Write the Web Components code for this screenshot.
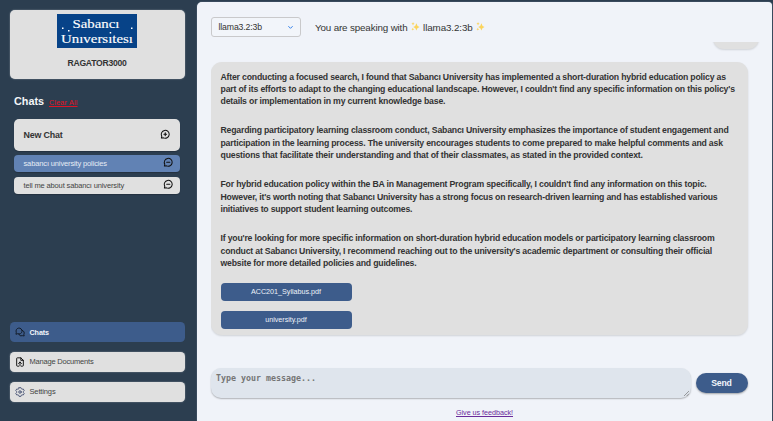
<!DOCTYPE html>
<html lang="en"><head><meta charset="utf-8"><title>RAGATOR3000</title>
<style>html,body{margin:0;height:100%;overflow:hidden}body{background:#2c3e50;font-family:"Liberation Sans",Arial,sans-serif;color:#333}</style></head><body>
<rag-app></rag-app>
<script>
const make = (name, html, ready) => {
  const t = document.createElement('template');
  t.innerHTML = '<style>*{box-sizing:border-box}svg{display:block}</style>' + html;
  customElements.define(name, class extends HTMLElement {
    constructor(){ super(); this.attachShadow({mode:'open'}).append(t.content.cloneNode(true)); }
    connectedCallback(){ if (ready) ready(this, this.shadowRoot); }
  });
};

/* One line of text whose tracking is tuned to occupy the width in "w". */
make('fit-text', `<style>:host{display:inline-block;white-space:pre}span{display:inline-block}:host([link]) span{text-decoration:underline}</style><span><slot></slot></span>`, (el, r) => {
  const s = r.querySelector('span'), w = parseFloat(el.getAttribute('w'));
  s.style.letterSpacing = '0px';
  s.style.letterSpacing = (w - s.getBoundingClientRect().width) / el.textContent.length + 'px';
});

const icons = {
  plus:'<path d="M3.2 20.8l.9-4.3A9 9 0 1 1 8 20.2z"/><path d="M12 9v6M9 12h6" stroke-width="2.6"/>',
  minus:'<path d="M3.2 20.8l.9-4.3A9 9 0 1 1 8 20.2z"/><path d="M8.500 12h7"/>',
  chats:'<path d="M2.500 16.500l.6-3.700A7.200 7.200 0 1 1 7 16.500z"/><path d="M17.500 8a6.300 6.300 0 0 1 3.700 9.500l.8 4-3.900-.7A6.700 6.700 0 0 1 9 17"/>',
  doc:'<path d="M9 22H5.500A1.500 1.500 0 0 1 4 20.500V3.500A1.500 1.500 0 0 1 5.500 2H14l6 6v12.500a1.500 1.500 0 0 1-1.500 1.500H15M14 2v6h6M12 21V12M8.500 15.500L12 12l3.500 3.500"/>',
  gear:'<path d="M9.700 1.500h4.600l.9 2.800 1.700 1 2.900-.6 2.300 4-2 2.200v2.200l2 2.200-2.300 4-2.900-.6-1.700 1-.9 2.800H9.700l-.9-2.800-1.700-1-2.900.6-2.300-4 2-2.200v-2.200l-2-2.200 2.300-4 2.900.6 1.700-1z" stroke-width="1.900"/><circle cx="12" cy="12" r="3" stroke-width="2"/>',
  down:'<path d="M3 7l9 9 9-9" stroke-width="4.500"/>'
};
make('ui-icon', `<style>:host{display:block;flex:none;width:11px;height:11px}svg{width:100%;height:100%}</style>
<svg viewBox="0 0 24 24" fill="none" stroke="currentColor" stroke-width="2.3" stroke-linecap="round" stroke-linejoin="round"></svg>`,
 (el, r) => { r.querySelector('svg').innerHTML = icons[el.getAttribute('name')]; });

make('spark-icon', `<style>:host{display:inline-block;width:9px;height:10px;margin:0 .5px}</style>
<svg viewBox="0 0 20 20" fill="#fbd45c"><path d="M12 3q1 6.500 7 8-6 1.500-7 8-1-6.500-7-8 6-1.500 7-8zM4.500 0q.5 3.500 3.500 4-3 .5-3.500 4Q4 4.500 1 4q3-.5 3.500-4zM4 13q.4 2.600 3 3-2.600.4-3 3-.4-2.600-3-3 2.600-.4 3-3z"/></svg>`);

make('brand-card', `<style>:host{display:flex;flex-direction:column;align-items:center;height:69.500px;margin-left:9.500px;width:175px;background:#e0e0e0;border-radius:5px;padding-top:4.500px;box-shadow:0 0 1.500px #fff8}
.logo{width:80px;height:34px;background:#074388;color:#fff}.name{margin-top:9px;font-weight:bold;font-size:8.600px;line-height:12px;color:#333}
text{font-family:"Liberation Serif",serif;font-size:13.300px;fill:#fff;stroke:#fff;stroke-width:.15px}</style>
<div class="logo"><svg width="80" height="34" viewBox="0 0 80 34"><text x="15.500" y="14" textLength="47" lengthAdjust="spacingAndGlyphs">Sabancı</text><text x="4" y="29.200" textLength="72" lengthAdjust="spacingAndGlyphs">Unıversıtesı</text><g fill="#fff"><rect x="5" y="13.500" width="1.500" height="1.500"/><rect x="11" y="16" width="1.500" height="1.500"/><rect x="74" y="13.500" width="1.500" height="1.500"/><rect x="52.700" y="18" width="1.500" height="1.500"/></g></svg></div>
<div class="name"><fit-text w="59">RAGATOR3000</fit-text></div>`);

make('chat-row', `<style>:host{display:flex;align-items:center;justify-content:space-between;height:17px;border-radius:4px;background:#e0e0e0;color:#444;font-size:7.500px;padding:0 7px 0 9.500px;box-shadow:0 1px 1px #0003}
:host([active]){background:#6182b4;color:#e6ecf5}:host([big]){height:32px;border-radius:5px;font-size:8.900px;font-weight:bold;color:#333;padding-right:10px}
ui-icon{color:#111;width:10.500px;height:10.500px;margin-top:-2px}:host([big]) ui-icon{margin-top:-1px}:host([big]) fit-text{margin-top:-1px}</style><slot></slot><ui-icon></ui-icon>`,
 (el,r)=>{ const i=r.querySelector('ui-icon'); i.setAttribute('name', el.hasAttribute('big')?'plus':'minus'); i.connectedCallback(); });

make('nav-row', `<style>:host{display:flex;align-items:center;gap:5px;height:20px;border-radius:4.500px;background:#e0e0e0;color:#444;font-size:7.500px;padding-left:5px;box-shadow:0 0 1.500px #fff8}
:host([active]){background:#3d5c8b;color:#f3f6fb;font-weight:bold;font-size:7.200px;box-shadow:none}</style><slot name="icon"></slot><slot></slot>`);

make('rag-sidebar', `<style>:host{display:flex;flex-direction:column;width:196px;height:421px;padding-top:9.500px;background:#2c3e50}
.head{display:flex;align-items:baseline;gap:5px;margin:15px 0 0 14px;height:25px;color:#f4f6f8;font-size:10.800px;font-weight:bold;line-height:14px}
.clear{color:#e11425;font-size:7.200px;font-weight:normal}
.list{display:flex;flex-direction:column;gap:4.500px;margin-left:14px;width:166px;margin-top:-.5px}
nav{display:flex;flex-direction:column;gap:9.700px;width:175px;margin:auto 0 19.500px 9.500px}</style>
<brand-card></brand-card><div class="head"><fit-text w="30">Chats</fit-text><span class="clear"><fit-text link w="28.500">Clear All</fit-text></span></div>
<div class="list"><chat-row big><fit-text w="39">New Chat</fit-text></chat-row><chat-row active><fit-text w="83.500">sabancı university policies</fit-text></chat-row><chat-row><fit-text w="100.500">tell me about sabancı university</fit-text></chat-row></div>
<nav><nav-row active><ui-icon slot="icon" name="chats" style="color:#121a26;width:10px;height:10px"></ui-icon><fit-text w="19.500">Chats</fit-text></nav-row>
<nav-row><ui-icon slot="icon" name="doc" style="color:#111;width:10px;height:10px"></ui-icon><fit-text w="64">Manage Documents</fit-text></nav-row>
<nav-row><ui-icon slot="icon" name="gear" style="color:#344168;width:10px;height:10px"></ui-icon><fit-text w="26">Settings</fit-text></nav-row></nav>`);

make('model-bar', `<style>:host{display:flex;align-items:center;gap:14px;height:20px;color:#333;font-size:9.800px}
.select{display:flex;align-items:center;justify-content:space-between;width:90px;height:20px;border:1px solid #c9c9cb;border-radius:3px;padding:0 7px 0 6.500px;font-size:8.700px;background:#f2f5fa}
ui-icon{width:5px;height:5px;color:#2b7be9}.say{display:flex;align-items:center;gap:2.800px}</style>
<div class="select"><fit-text w="43.500">llama3.2:3b</fit-text><ui-icon name="down"></ui-icon></div>
<div class="say"><fit-text w="92.500">You are speaking with</fit-text><spark-icon></spark-icon><fit-text w="49.500">llama3.2:3b</fit-text><spark-icon></spark-icon></div>`);

make('file-button', `<style>:host{display:flex;align-items:center;justify-content:center;width:131px;height:18px;background:#3d5c8b;border-radius:4px;color:#edf2f9;font-size:7.200px}</style><slot></slot>`);

make('answer-bubble', `<style>:host{display:block;flex:none;width:537px;height:272.500px;border-radius:11px;background:#e0e0e0;padding:8.500px 10px 0 9.500px;box-shadow:0 1px 2px #0002;font-size:8.700px;font-weight:bold;color:#333}
p{margin:0 0 16.600px;line-height:12.450px}p fit-text{display:block;height:12.450px}.files{display:flex;flex-direction:column;gap:10px;font-weight:normal;margin-top:-3.500px}</style>
<p><fit-text w="505.300">After conducting a focused search, I found that Sabancı University has implemented a short-duration hybrid education policy as</fit-text><fit-text w="514.300">part of its efforts to adapt to the changing educational landscape. However, I couldn't find any specific information on this policy's</fit-text><fit-text w="224.800">details or implementation in my current knowledge base.</fit-text></p>
<p><fit-text w="508">Regarding participatory learning classroom conduct, Sabancı University emphasizes the importance of student engagement and</fit-text><fit-text w="502.300">participation in the learning process. The university encourages students to come prepared to make helpful comments and ask</fit-text><fit-text w="422.300">questions that facilitate their understanding and that of their classmates, as stated in the provided context.</fit-text></p>
<p><fit-text w="486">For hybrid education policy within the BA in Management Program specifically, I couldn't find any information on this topic.</fit-text><fit-text w="497">However, it's worth noting that Sabancı University has a strong focus on research-driven learning and has established various</fit-text><fit-text w="191.800">initiatives to support student learning outcomes.</fit-text></p>
<p><fit-text w="494">If you're looking for more specific information on short-duration hybrid education models or participatory learning classroom</fit-text><fit-text w="491.500">conduct at Sabancı University, I recommend reaching out to the university's academic department or consulting their official</fit-text><fit-text w="196">website for more detailed policies and guidelines.</fit-text></p>
<div class="files"><file-button><fit-text w="70">ACC201_Syllabus.pdf</fit-text></file-button><file-button><fit-text w="41.500">university.pdf</fit-text></file-button></div>`);

make('message-form', `<style>:host{display:flex;align-items:center;gap:4.500px;margin-left:-.5px}
.box{display:flex;width:480.500px;height:29.500px;border-radius:10px;background:#dfe5ed;box-shadow:0 1px 1.500px #0004;padding:5px 0 0 5.500px;font:bold 8.300px/11px "DejaVu Sans Mono",monospace;color:#757575;justify-content:space-between}
.box svg{align-self:flex-end;margin:0 2px 1.500px 0}.send{display:flex;align-items:center;justify-content:center;width:52px;height:19.500px;border-radius:10px;background:#3d5c8b;color:#f1f5fb;font-size:8.700px;font-weight:bold;box-shadow:0 1px 2px #0005}</style>
<div class="box"><fit-text w="100">Type your message...</fit-text><svg width="5" height="5" viewBox="0 0 5 5" stroke="#777" stroke-width=".7"><path d="M0 5L5 0M2.700 5L5 2.700"/></svg></div><div class="send"><fit-text w="20.500">Send</fit-text></div>`);

make('rag-main', `<style>:host{display:flex;flex-direction:column;width:575px;height:419px;margin-top:2px;background:#f0f3f9;border-radius:5px 4px 0 0;padding:15px 0 0 14.500px;box-shadow:0 0 1px #b9c4d2}
.thread{margin-top:5px;height:308px;overflow:hidden;display:flex;flex-direction:column}
.user{align-self:flex-end;flex:none;width:46px;height:26px;border-radius:11px;background:#e0e0e0;margin:-19.500px 13px 13.500px 0;box-shadow:0 1px 2px #0002}
message-form{margin-top:18px}.feedback{color:#6b2a9b;font-size:7.200px;line-height:10px;margin:10.500px 0 0 245px}</style>
<model-bar></model-bar><div class="thread"><div class="user"></div><answer-bubble></answer-bubble></div><message-form></message-form><div class="feedback"><fit-text link w="57">Give us feedback!</fit-text></div>`);

make('rag-app', `<style>:host{display:flex;width:773px;height:421px;gap:.5px;overflow:hidden;background:#2c3e50}</style><rag-sidebar></rag-sidebar><rag-main></rag-main>`);

/* Measure again once the whole tree has its inherited fonts. */
const refit = root => root.querySelectorAll('*').forEach(e => { if (e.localName === 'fit-text') e.connectedCallback(); if (e.shadowRoot) refit(e.shadowRoot); });
refit(document);
</script></body></html>
